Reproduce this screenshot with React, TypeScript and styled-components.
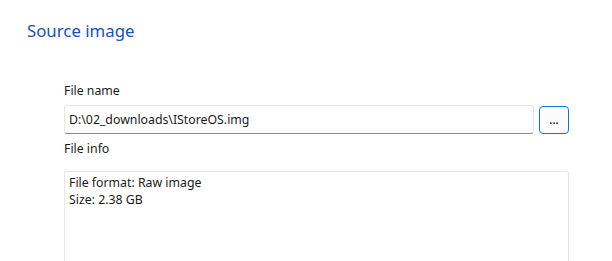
import React from "react";
import styled, { createGlobalStyle } from "styled-components";

const GlobalStyle = createGlobalStyle`
  html, body {
    margin: 0;
    padding: 0;
    background: #fff;
    overflow: hidden;
  }
  body {
    font-family: "Noto Sans", "Liberation Sans", sans-serif;
  }
`;

const Page = styled.div`
  width: 612px;
  height: 261px;
  padding: 19px 0 0 27px;
  box-sizing: border-box;
  overflow: hidden;
`;

const Title = styled.h2`
  margin: 0;
  font-size: 16.8px;
  line-height: 24px;
  font-weight: 400;
  color: #1550c1;
`;

const Section = styled.div`
  margin: 39px 0 0 37px;
  display: flex;
  flex-direction: column;
  width: 505px;
`;

const Label = styled.div<{ $gap: number }>`
  font-size: 12.3px;
  line-height: 18px;
  color: #1a1a1a;
  margin-bottom: ${(p) => p.$gap}px;
`;

const Row = styled.div`
  display: flex;
  align-items: flex-start;
  gap: 5px;
  margin-bottom: 6px;
`;

const TextBox = styled.div`
  flex: 1;
  height: 29px;
  box-sizing: border-box;
  border: 1px solid #e5e5e5;
  border-bottom: 1px solid #8a8a8a;
  border-radius: 3px;
  padding: 0 4px;
  display: flex;
  align-items: center;
  font-size: 12.3px;
  color: #1a1a1a;
  background: #fff;
`;

const BrowseButton = styled.button`
  width: 30px;
  height: 28px;
  margin-top: 1px;
  box-sizing: border-box;
  border: 1px solid #0a78d4;
  border-radius: 4px;
  background: #fbfbfb;
  color: #1a1a1a;
  font-family: inherit;
  font-size: 11px;
  font-weight: 700;
  line-height: 1;
  padding: 0 0 2px;
  cursor: pointer;
`;

const InfoBox = styled.div`
  height: 120px;
  box-sizing: border-box;
  border: 1px solid #e8e8e8;
  border-right-color: #e0e0e0;
  border-radius: 3px 3px 0 0;
  padding: 2px 4px;
  font-size: 12.3px;
  line-height: 17px;
  color: #1a1a1a;
  white-space: pre-line;
`;

export default function App() {
  return (
    <>
      <GlobalStyle />
      <Page>
        <Title>Source image</Title>
        <Section>
          <Label $gap={5}>File name</Label>
          <Row>
            <TextBox>D:\02_downloads\IStoreOS.img</TextBox>
            <BrowseButton>...</BrowseButton>
          </Row>
          <Label $gap={13}>File info</Label>
          <InfoBox>{"File format: Raw image\nSize: 2.38 GB"}</InfoBox>
        </Section>
      </Page>
    </>
  );
}
